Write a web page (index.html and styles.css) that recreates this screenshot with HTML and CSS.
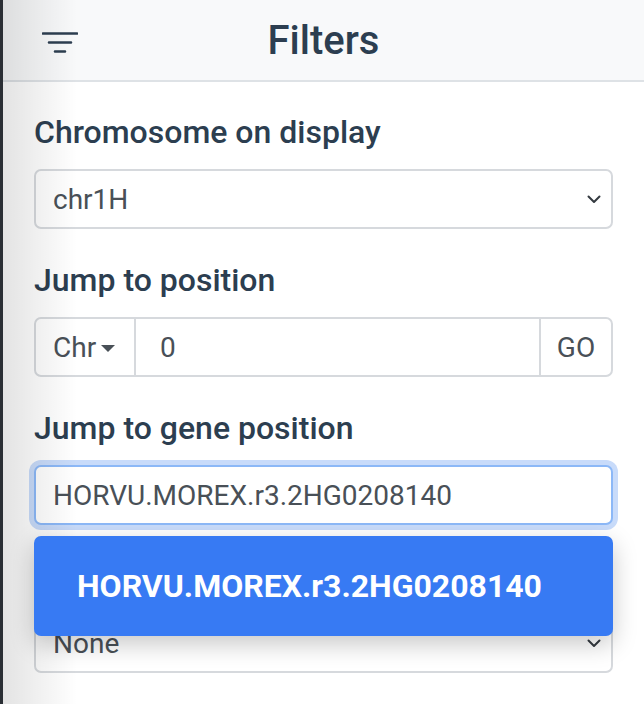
FILE: index.html
```html
<!DOCTYPE html>
<html>
<head>
<meta charset="utf-8">
<link rel="stylesheet" href="styles.css">
</head>
<body>
<div class="edge"></div>
<div class="panel">
  <header class="head">
    <svg class="filter-icon" width="36" height="22" viewBox="0 0 36 22">
      <path d="M1 2.5H35M7 11.5H29M13 20.5H23" stroke="#2c3e50" stroke-width="2.6" stroke-linecap="round" fill="none"/>
    </svg>
    <h1 class="title">Filters</h1>
    <span></span>
  </header>
  <main class="content">
    <div class="group">
      <div class="label">Chromosome on display</div>
      <div class="select">
        <span>chr1H</span>
        <svg class="chev" width="14" height="9" viewBox="0 0 14 9"><path d="M1.5 1.5 7 7l5.5-5.5" stroke="#343a40" stroke-width="2" fill="none" stroke-linecap="round" stroke-linejoin="round"/></svg>
      </div>
    </div>
    <div class="group">
      <div class="label">Jump to position</div>
      <div class="igroup">
        <div class="addon chr">Chr<span class="caret"></span></div>
        <div class="ifield">0</div>
        <div class="addon go">GO</div>
      </div>
    </div>
    <div class="group rel">
      <div class="label">Jump to gene position</div>
      <div class="input focus">HORVU.MOREX.r3.2HG0208140</div>
      <div class="dropdown">HORVU.MOREX.r3.2HG0208140</div>
    </div>
    <div class="group">
      <div class="label label-hidden" aria-hidden="true">&nbsp;</div>
      <div class="select">
        <span>None</span>
        <svg class="chev" width="14" height="9" viewBox="0 0 14 9"><path d="M1.5 1.5 7 7l5.5-5.5" stroke="#343a40" stroke-width="2" fill="none" stroke-linecap="round" stroke-linejoin="round"/></svg>
      </div>
    </div>
  </main>
</div>
</body>
</html>
```
FILE: styles.css
```css
* { box-sizing: border-box; }
html, body { margin: 0; padding: 0; height: 100%; }
body {
  display: flex;
  font-family: Roboto, "Liberation Sans", sans-serif;
  background: #fff;
  overflow: hidden;
}
.edge { width: 3px; background: #2a2e34; flex: none; }
.panel { flex: 1; position: relative; }
.panel::before {
  content: "";
  position: absolute;
  left: 0; top: 0; bottom: 0;
  width: 74px;
  background: linear-gradient(to right, rgba(0,0,0,0.11), rgba(0,0,0,0));
  z-index: 1;
  pointer-events: none;
}
.head {
  height: 82px;
  background: #f8f9fa;
  border-bottom: 2px solid #dee2e6;
  display: grid;
  grid-template-columns: 1fr auto 1fr;
  align-items: center;
}
.filter-icon { margin-left: 39px; margin-top: 4px; }
.title {
  margin: 0;
  font-size: 40px;
  font-weight: 500;
  color: #2c3e50;
  line-height: 1;
  padding-top: 2px;
}
.content { padding: 32px 31px 0; }
.group { margin-bottom: 33px; }
.rel { position: relative; }
.label {
  font-size: 32px;
  font-weight: 500;
  color: #2c3e50;
  line-height: 37px;
  margin-bottom: 18px;
}
.select, .input, .igroup {
  height: 60px;
  border: 2px solid #d6d9dd;
  border-radius: 7px;
  font-size: 28px;
  color: #495057;
  background: #fff;
}
.select {
  display: flex;
  align-items: center;
  justify-content: space-between;
  padding: 0 10px 0 17px;
}
.input {
  display: flex;
  align-items: center;
  padding: 0 17px;
}
.input.focus {
  border-color: #8cb8f7;
  box-shadow: 0 0 0 5px #c8dbfa;
}
.igroup { display: flex; align-items: stretch; }
.addon { display: flex; align-items: center; }
.chr { width: 100px; padding-left: 17px; border-right: 2px solid #d6d9dd; }
.caret {
  display: inline-block;
  margin-left: 5px;
  margin-top: 2px;
  border-top: 7px solid #495057;
  border-left: 7px solid transparent;
  border-right: 7px solid transparent;
}
.ifield { flex: 1; display: flex; align-items: center; padding-left: 24px; }
.go { width: 72px; justify-content: center; border-left: 2px solid #d6d9dd; }
.dropdown {
  position: absolute;
  left: 0; right: 0;
  top: calc(100% + 11px);
  height: 100px;
  background: #377af3;
  border-radius: 7px;
  box-shadow: 0 8px 24px rgba(0,0,0,0.22);
  color: #fff;
  font-size: 32px;
  font-weight: 700;
  display: flex;
  align-items: center;
  padding-left: 43px;
  z-index: 2;
}
```
